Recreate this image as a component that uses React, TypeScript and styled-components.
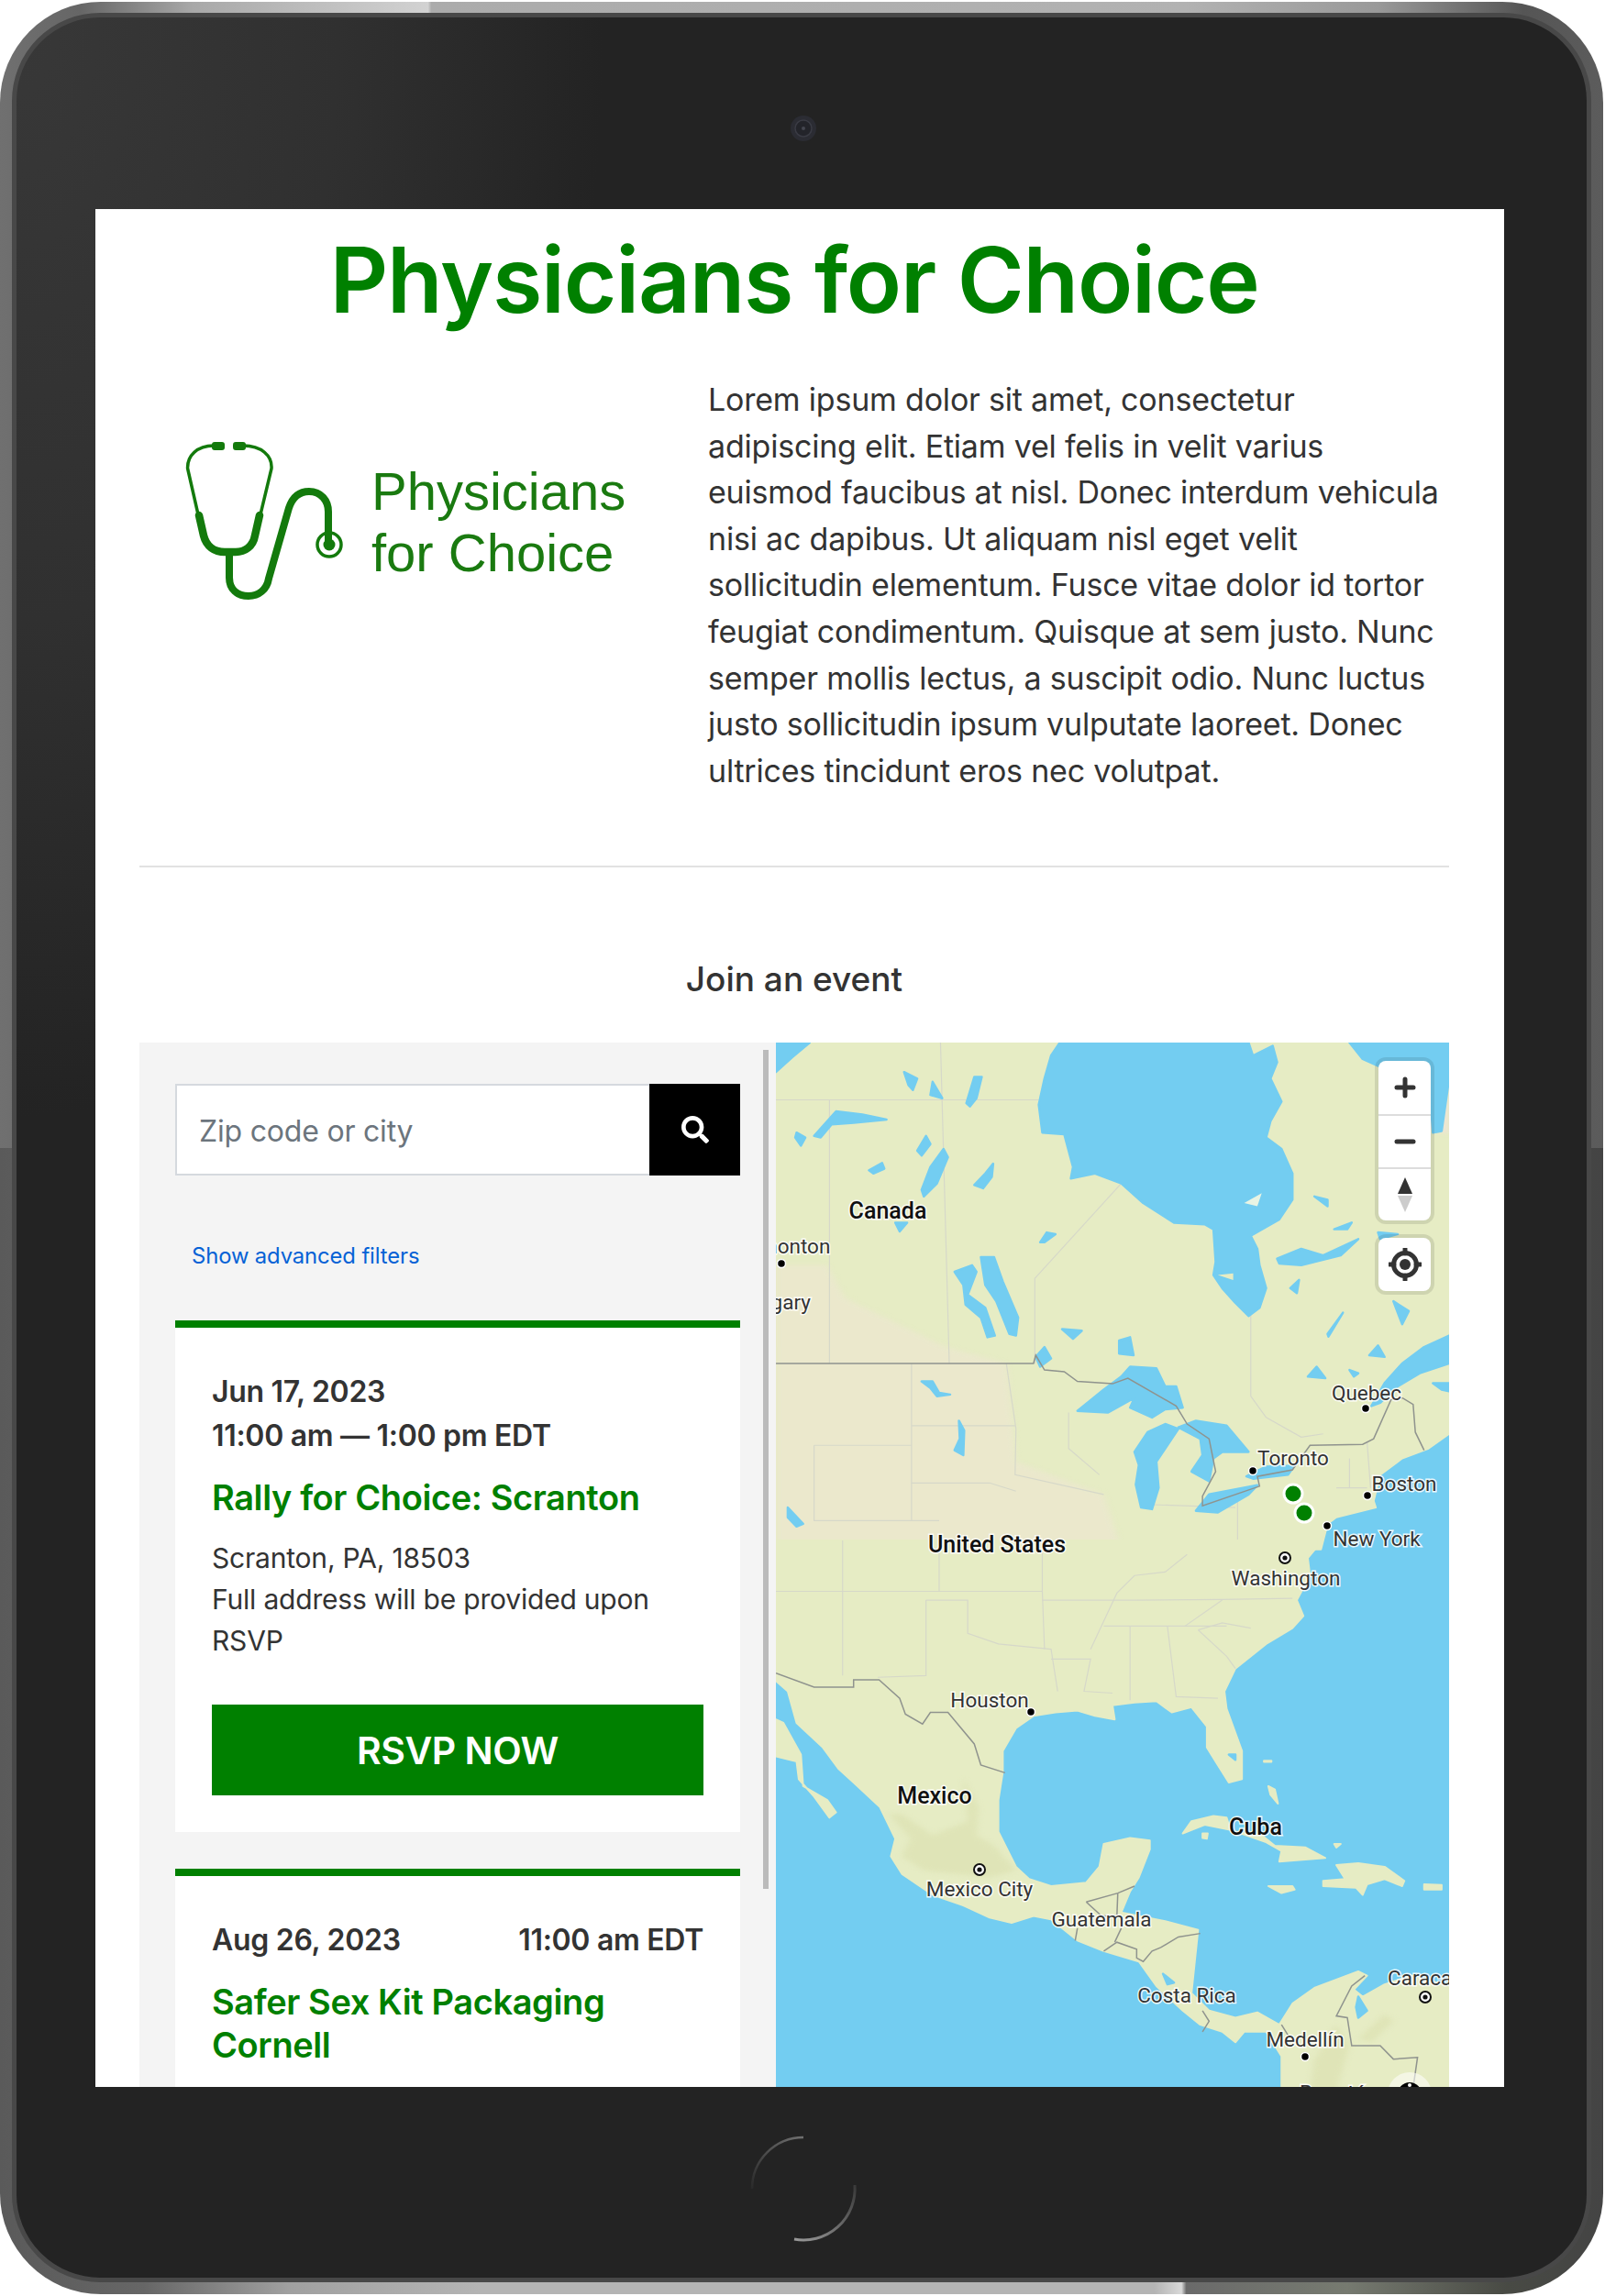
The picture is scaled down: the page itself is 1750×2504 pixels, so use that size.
import styled, { createGlobalStyle } from "styled-components";
import { FaSearch } from "react-icons/fa";

const GlobalStyle = createGlobalStyle`
  html, body {
    margin: 0;
    padding: 0;
    background: #fff;
  }
  * {
    box-sizing: border-box;
  }
`;

const Page = styled.div`
  width: 1750px;
  height: 2504px;
  padding: 2px 2px 2px 0;
`;

const Shell = styled.div`
  width: 1748px;
  height: 2500px;
  padding: 12px 13px 13px;
  border-radius: 110px;
  overflow: hidden;
  background:
    linear-gradient(90deg, #707070 0, #666 5%, #a8a8a8 12%, #d2d2d2 26.7%, #ababab 26.9%, #b2b2b2 74%, #999 86%, #555 95%, #5c5c5c 100%) top / 100% 50% no-repeat,
    linear-gradient(90deg, #5a5a5a 0, #666 9%, #a0a0a0 18%, #b4b4b4 30%, #b4b4b4 72%, #d8d8d8 73.7%, #6a6a6a 74%, #767a70 84%, #484a44 94%, #444 100%) bottom / 100% 50% no-repeat;
`;

const Bezel = styled.div`
  height: 100%;
  border: 5px solid #484848;
  border-radius: 96px;
  display: flex;
  flex-direction: column;
  align-items: center;
  background:
    radial-gradient(ellipse 640px 1200px at 0 0, #383838 0, #303030 55%, transparent 100%),
    #232323;
`;

const CameraRow = styled.div`
  height: 209px;
  flex-shrink: 0;
  width: 100%;
  display: flex;
  justify-content: center;
  padding: 104px 0 0 4px;
`;

const HomeRow = styled.div`
  flex: 1;
  width: 100%;
  display: flex;
  justify-content: center;
  padding: 51px 0 0 4px;
`;

const Screen = styled.div`
  width: 1536px;
  height: 2048px;
  flex-shrink: 0;
  margin-right: 4px;
  padding: 0 60px 0 48px;
  overflow: hidden;
  background: #fff;
  font-family: Inter, "Liberation Sans", sans-serif;
  color: #333;
`;

const PageTitle = styled.h1`
  margin: 0;
  padding-top: 27px;
  height: 116px;
  font-size: 99px;
  line-height: 100px;
  font-weight: 600;
  letter-spacing: -1.2px;
  text-align: center;
  color: #008000;
`;

const Intro = styled.section`
  display: grid;
  grid-template-columns: 620px 1fr;
  height: 602px;
  padding-top: 67px;
  border-bottom: 2px solid #e2e2e2;
`;

const LogoWrap = styled.div`
  display: flex;
  align-items: flex-start;
  padding: 69px 0 0 49px;
`;

const LogoText = styled.div`
  margin: 22px 0 0 29px;
  font-family: "Liberation Sans", Arial, sans-serif;
  font-size: 58px;
  line-height: 67px;
  color: #1a7a10;
`;

const IntroText = styled.p`
  margin: 0;
  font-size: 34px;
  line-height: 50.6px;
  color: #333;
  letter-spacing: -0.2px;
`;

const SectionTitle = styled.h2`
  margin: 0;
  height: 191px;
  padding-top: 97px;
  font-size: 37px;
  line-height: 50px;
  font-weight: 500;
  text-align: center;
`;

const Finder = styled.section`
  display: grid;
  grid-template-columns: 694px 734px;
  height: 1139px;
`;

const Sidebar = styled.div`
  position: relative;
  padding: 45px 39px 0;
  background: #f4f4f4;
  overflow: hidden;
`;

const Scrollbar = styled.div`
  position: absolute;
  top: 8px;
  right: 8px;
  width: 6px;
  height: 915px;
  background: #bbb;
`;

const SearchBar = styled.form`
  display: flex;
  height: 100px;
`;

const SearchInput = styled.input`
  flex: 1;
  min-width: 0;
  border: 2px solid #d5d9de;
  border-right: none;
  background: #fff;
  padding: 2px 24px 0;
  font: 400 32px Inter, "Liberation Sans", sans-serif;
  letter-spacing: -0.2px;
  &::placeholder {
    color: #6c757d;
    opacity: 1;
  }
`;

const SearchButton = styled.button`
  width: 99px;
  border: none;
  background: #000;
  color: #fff;
  display: flex;
  align-items: center;
  justify-content: center;
  padding: 0;
  font-size: 30px;
`;

const FilterLink = styled.a`
  display: block;
  margin: 70px 0 0 18px;
  height: 88px;
  font-size: 23.8px;
  line-height: 36px;
  color: #0562d6;
  letter-spacing: -0.1px;
`;

const EventCard = styled.article`
  background: #fff;
  border-top: 8px solid #008000;
  padding: 46px 40px 40px;
  margin-bottom: 40px;
`;

const DateLine = styled.div`
  font-size: 32px;
  line-height: 48px;
  font-weight: 600;
  color: #333;
  letter-spacing: -0.3px;
`;

const DateRow = styled(DateLine)`
  display: flex;
  justify-content: space-between;
`;

const EventTitle = styled.a`
  display: block;
  margin: 20px 0 20px;
  font-size: 38px;
  line-height: 47px;
  font-weight: 600;
  color: #008000;
  letter-spacing: -0.4px;
`;

const Address = styled.div`
  font-size: 30px;
  line-height: 44.8px;
  color: #333;
  letter-spacing: -0.2px;
`;

const RsvpButton = styled.button`
  display: block;
  width: 100%;
  height: 99px;
  margin-top: 48px;
  border: none;
  background: #008000;
  color: #fff;
  font: 600 41px Inter, "Liberation Sans", sans-serif;
  letter-spacing: -0.5px;
`;

const MapPane = styled.div`
  position: relative;
  overflow: hidden;
  background: #73cdf1;
`;

const MapCanvas = styled.svg`
  display: block;
  width: 734px;
  height: 1139px;
`;

const MapLabel = styled.text<{ $strong?: boolean }>`
  font-family: Roboto, "Liberation Sans", sans-serif;
  font-size: ${({ $strong }) => ($strong ? "25px" : "22.5px")};
  font-weight: ${({ $strong }) => ($strong ? 500 : 400)};
  fill: ${({ $strong }) => ($strong ? "#111" : "#333")};
  stroke: rgba(255, 255, 255, 0.85);
  stroke-width: 3px;
  paint-order: stroke;
  text-anchor: middle;
`;

const ThinLine = styled.path<{ $dark?: boolean }>`
  fill: none;
  stroke: ${({ $dark }) => ($dark ? "#8f938e" : "#d6d8c9")};
  stroke-width: ${({ $dark }) => ($dark ? 1.5 : 1.2)}px;
  vector-effect: non-scaling-stroke;
`;

const WaterBody = styled.polygon`
  fill: #73cdf1;
  stroke: #73cdf1;
  stroke-width: 2.5px;
  stroke-linejoin: round;
  vector-effect: non-scaling-stroke;
`;

const LandBody = styled.polygon`
  fill: #e6ecc4;
  stroke: #e6ecc4;
  stroke-width: 2px;
  stroke-linejoin: round;
  vector-effect: non-scaling-stroke;
`;

const SoftShade = styled.polygon<{ $tone: string }>`
  fill: ${({ $tone }) => $tone};
  filter: blur(7px);
`;

const MapControls = styled.div`
  position: absolute;
  top: 20px;
  right: 20px;
  display: flex;
  flex-direction: column;
  gap: 19px;
`;

const ControlGroup = styled.div`
  width: 57px;
  background: #fff;
  border-radius: 8px;
  box-shadow: 0 0 0 4px rgba(0, 0, 0, 0.1);
  overflow: hidden;
`;

const ControlButton = styled.div`
  height: 58px;
  display: flex;
  align-items: center;
  justify-content: center;
  & + & {
    border-top: 2px solid #ddd;
  }
`;

// north and south groups take their coordinates from two crops of the map
const northTransform = "translate(-6.2,-7.14) scale(0.4785,0.3571)";
const southTransform = "translate(-6.2,543) scale(0.4785,0.3827)";

const northLand =
  "13,20 1547,20 1547,1215 1500,1260 1440,1290 1390,1340 1375,1420 1380,1440 1290,1470 1270,1490 1255,1568 13,1568";

const southLand =
  "13,0 1245,0 1245,20 1225,50 1230,100 1200,170 1215,215 1190,250 1130,295 1060,365 1035,430 1040,480 1075,600 1075,680 1045,690 1020,640 995,590 995,530 960,475 915,490 880,458 830,462 780,470 785,510 740,500 700,485 650,490 600,500 560,535 530,600 530,660 520,740 520,830 560,930 590,965 640,985 720,975 750,930 760,865 820,848 865,855 865,880 840,960 820,1000 800,1060 900,1085 975,1110 965,1230 960,1290 1000,1340 1060,1360 1110,1345 1160,1380 1190,1320 1240,1275 1340,1228 1360,1240 1330,1280 1350,1300 1400,1265 1460,1240 1547,1270 1547,1568 1165,1568 1165,1470 1130,1400 1080,1400 1060,1430 1030,1400 980,1380 940,1340 880,1270 840,1200 760,1170 700,1140 640,1080 600,1070 550,1090 500,1075 440,1040 370,1010 300,950 275,900 285,850 250,760 190,690 155,650 120,590 60,520 40,430 13,400";

const southIslands = [
  "13,510 30,520 70,610 75,700 130,740 150,775 135,790 100,730 65,680 60,630 13,615",
  "940,835 960,800 1010,785 1040,790 1050,830 1120,840 1150,870 1220,875 1265,905 1160,915 1165,885 1130,860 1050,825 990,810",
  "1290,925 1340,920 1400,930 1445,970 1440,985 1400,965 1360,980 1350,1010 1335,990 1260,985 1260,970 1310,965",
  "1135,985 1190,985 1195,995 1165,1005",
  "1490,980 1530,982 1530,995 1490,995",
  "1135,700 1150,710 1157,750 1140,725",
  "1285,865 1300,865 1290,875",
  "985,835 997,835 995,850 985,848",
  "1125,628 1142,628 1142,631 1125,631",
];

const northWater = [
  "640,60 660,20 1090,20 1100,60 1145,30 1155,80 1140,130 1165,200 1140,260 1130,310 1165,345 1190,420 1190,500 1160,560 1095,610 1110,650 1115,700 1130,770 1115,830 1090,855 1060,815 1030,770 1010,730 1015,690 1010,590 990,575 920,570 850,510 800,450 740,420 685,435 690,400 670,300 620,295 612,210 625,130",
  "13,20 90,20 50,65 13,110",
  "1320,20 1547,20 1547,130 1530,290 1510,295 1500,110 1400,100 1350,70",
  "1547,915 1490,950 1440,1000 1400,1060 1370,1130 1390,1120 1430,1070 1480,1030 1547,1000",
  "1510,1060 1547,1060 1547,1085 1530,1080",
  "700,1145 760,1080 800,1040 820,1010 880,1015 900,1070 925,1070 940,1135 900,1140 870,1165 820,1135 830,1105 770,1150",
  "830,1270 860,1210 900,1185 930,1200 900,1260 880,1300 885,1380 870,1445 845,1440 833,1370 840,1310",
  "930,1195 970,1175 1040,1190 1090,1270 1030,1270 1010,1290 1000,1360 960,1330 985,1280 980,1230",
  "970,1450 1000,1400 1110,1372 1090,1400 1020,1455",
  "1085,1345 1130,1315 1195,1312 1180,1340 1100,1352",
  "480,675 510,675 530,750 565,860 560,915 545,910 515,810 490,760",
  "420,720 460,700 470,720 450,790 490,830 512,915 495,920 480,860 445,820 440,760",
  "305,110 335,130 325,165 315,150",
  "370,140 392,190 365,180",
  "465,125 482,125 470,190 455,215 447,205",
  "100,305 150,230 210,240 265,255 190,265 140,270 115,310",
  "60,295 80,310 70,335 57,310",
  "335,350 355,305 365,330 345,365",
  "225,410 255,388 260,405 235,420",
  "395,345 405,370 380,450 350,490 345,470 365,400",
  "465,455 490,420 508,390 505,430 485,465",
  "285,570 312,570 295,597",
  "615,630 630,600 650,605 625,630",
  "795,930 820,920 828,975 795,970",
  "665,895 710,900 690,925",
  "605,980 625,950 640,985 615,1010",
  "345,1055 370,1055 385,1090 410,1095 380,1100 365,1075",
  "430,1175 442,1205 440,1280 420,1265 432,1230",
  "40,1440 75,1490 60,1498 40,1470",
  "1240,490 1270,500 1270,520",
  "1285,590 1325,570 1315,590",
  "1155,680 1210,650 1260,670 1340,620 1300,670 1210,700 1160,695",
  "1385,600 1430,605 1390,620",
  "1185,770 1205,745 1200,785",
  "1420,810 1455,840 1440,880",
  "1270,910 1305,845 1280,900 1272,918",
  "1365,975 1385,945 1400,980",
  "1225,1040 1245,1010 1265,1045",
  "1320,1020 1340,1030 1330,1040",
];

const northLight = [
  "M135,195 L135,1000",
  "M13,195 L612,195",
  "M388,20 L408,1000",
  "M603,1000 L603,740 L800,450",
  "M322,1000 L322,1480",
  "M538,1000 L560,1200 L558,1340 L760,1400",
  "M322,1190 L558,1190",
  "M100,1250 L322,1250 M100,1250 L100,1480 L385,1480",
  "M322,1365 L500,1365 L560,1390",
  "M1095,830 L1095,1100 L1130,1165 L1210,1225 L1260,1215",
  "M680,1150 L680,1260 L750,1340",
  "M845,1430 L1060,1440",
  "M1065,1420 L1065,1550 L1240,1550",
  "M1290,1380 L1360,1380 M1320,1290 L1320,1380 M1360,1240 L1368,1380",
];

const northBorder =
  "M13,1000 L600,1000 L605,975 L625,1020 L670,1025 L700,1055 L780,1062 L815,1045 L925,1130 L950,1185 L1000,1230 L1015,1330 L985,1405 L985,1435 L1115,1375 L1110,1345 L1190,1325 L1230,1250 L1350,1247 L1375,1230 L1415,1110 L1440,1105 L1465,1125 L1470,1210 L1490,1265";

const southLight = [
  "M13,145 L620,145",
  "M165,0 L165,385",
  "M355,170 L355,385 L245,390",
  "M355,170 L450,170 L450,265 L520,295 L640,310 L655,430",
  "M620,0 L620,145 L625,310",
  "M640,338 L730,338 L715,430 L780,435",
  "M620,170 L830,170 L1030,168 L1190,165",
  "M760,244 L1040,244",
  "M820,244 L820,455",
  "M905,244 L925,445 L1020,450",
  "M730,310 L790,150 L830,100 L900,90 L950,40",
  "M975,255 L1030,235 L1095,250 M975,255 L1040,330 L1060,365",
  "M945,244 L1030,170",
  "M385,0 L385,145",
];

const southBorder = [
  "M13,378 L100,418 L190,418 L190,397 L248,397 L295,450 L308,495 L347,523 L365,490 L405,490 L465,580 L480,640 L535,662",
  "M720,1030 L792,1005 L830,985 M720,1030 L755,1070 L790,1070 L792,1005",
  "M695,1140 L700,1105",
  "M760,1170 L790,1145 L835,1165 L835,1190 L850,1200 L870,1170 L890,1160 L930,1130 L980,1120",
  "M800,1105 L785,1145",
  "M1355,1240 L1325,1270 L1290,1355 L1315,1360 L1325,1440 L1390,1440 L1420,1478 L1475,1473 L1465,1560",
  "M1165,1380 L1180,1410",
  "M985,1340 L1000,1370 L985,1400",
];

const southTerrain = [
  "440,680 475,760 470,840 510,870 560,940 500,960 420,950 350,940 300,900 320,850 270,780 300,780 370,840 450,800",
  "1240,1480 1290,1380 1320,1440 1290,1568 1230,1568",
  "1340,1420 1400,1350 1420,1370 1370,1430",
];

const labels = [
  { text: "Canada", x: 122, y: 192, strong: true },
  { text: "Edmonton", x: 8, y: 230 },
  { text: "Calgary", x: 0, y: 291 },
  { text: "Quebec", x: 644, y: 390 },
  { text: "Toronto", x: 564, y: 461 },
  { text: "Boston", x: 685, y: 489 },
  { text: "New York", x: 655, y: 549 },
  { text: "United States", x: 241, y: 556, strong: true },
  { text: "Washington", x: 556, y: 592 },
  { text: "Houston", x: 233, y: 725 },
  { text: "Mexico", x: 173, y: 830, strong: true },
  { text: "Cuba", x: 523, y: 864, strong: true },
  { text: "Mexico City", x: 222, y: 931 },
  { text: "Guatemala", x: 355, y: 964 },
  { text: "Costa Rica", x: 448, y: 1047 },
  { text: "Caracas", x: 708, y: 1028 },
  { text: "Medellín", x: 577, y: 1095 },
  { text: "Bogotá", x: 607, y: 1153 },
];

const cityDots = [
  [6, 241],
  [520, 467],
  [645, 494],
  [601, 527],
  [643, 399],
  [278, 730],
  [577, 1106],
];

const capitals = [
  [555, 562],
  [222, 902],
  [708, 1041],
];

const eventPins = [
  [564, 492],
  [576, 513],
];

function WorldMap() {
  return (
    <MapCanvas viewBox="0 0 734 1139">
      <g transform={northTransform}>
        <LandBody points={northLand} />
        <SoftShade
          points="13,700 130,700 170,800 400,950 540,1000 560,1300 760,1400 800,1568 13,1568"
          $tone="rgba(236, 231, 208, 0.7)"
        />
        <SoftShade points="1390,20 1547,20 1547,300 1420,260" $tone="rgba(238, 228, 214, 0.85)" />
        {northLight.map((d) => (
          <ThinLine key={d} d={d} />
        ))}
        {northWater.map((points) => (
          <WaterBody key={points} points={points} />
        ))}
        <polygon points="1080,510 1120,480 1110,520" fill="#e8f4e4" />
        <polygon points="1020,730 1055,725 1055,745" fill="#e6ecc4" />
        <ThinLine $dark d={northBorder} />
      </g>
      <g transform={southTransform}>
        <LandBody points={southLand} />
        {southIslands.map((points) => (
          <LandBody key={points} points={points} />
        ))}
        {southTerrain.map((points) => (
          <SoftShade key={points} points={points} $tone="rgba(221, 226, 180, 0.8)" />
        ))}
        <WaterBody points="1045,610 1060,610 1060,625" />
        <WaterBody points="1340,1300 1360,1340 1340,1360 1335,1330" />
        <WaterBody points="895,1235 920,1260 905,1265" />
        {southLight.map((d) => (
          <ThinLine key={d} d={d} />
        ))}
        {southBorder.map((d) => (
          <ThinLine key={d} $dark d={d} />
        ))}
      </g>
      {labels.map((label) => (
        <MapLabel key={label.text} x={label.x} y={label.y} $strong={label.strong}>
          {label.text}
        </MapLabel>
      ))}
      {cityDots.map(([x, y]) => (
        <circle key={`${x}-${y}`} cx={x} cy={y} r={4.5} fill="#000" stroke="#fff" strokeWidth={1.5} />
      ))}
      {capitals.map(([x, y]) => (
        <g key={`${x}-${y}`}>
          <circle cx={x} cy={y} r={6} fill="#fff" stroke="#111" strokeWidth={2} />
          <circle cx={x} cy={y} r={2.6} fill="#111" />
        </g>
      ))}
      <circle cx={691} cy={1147} r={24} fill="#fff" opacity="0.55" />
      <circle cx={691} cy={1147} r={13} fill="#000" />
      <circle cx={691} cy={1137} r={2} fill="#fff" />
      {eventPins.map(([x, y]) => (
        <circle key={x} cx={x} cy={y} r={10} fill="#008000" stroke="#fff" strokeWidth={3} />
      ))}
    </MapCanvas>
  );
}

function LogoMark() {
  return (
    <svg width="175" height="175" viewBox="0 0 175 175" fill="none" stroke="#137a0c" strokeLinecap="round">
      <path d="M32 6 C 14 6 3 17 3.600 31 L15 81 M64 6 C 84 6 96 17 95 31 L83 81" strokeWidth="3.500" />
      <path d="M16 82 L21 104 C 24 116 33 122 44 122 L56 122 C 66 122 75 116 77 104 L82 82" strokeWidth="8.500" />
      <path
        d="M49 124 L49 150 C 49 163 58 170 70 170 C 81 170 90 163 92 151 L114 74 C 118 62 126 56 136 56 C 149 56 157 66 157 78 L157 110"
        strokeWidth="8"
      />
      <circle cx="158" cy="114" r="13" strokeWidth="3.500" />
      <circle cx="158" cy="114" r="6.500" fill="#137a0c" stroke="none" />
      <rect x="30" y="2" width="14" height="9" rx="3" fill="#137a0c" stroke="none" />
      <rect x="53" y="2" width="14" height="9" rx="3" fill="#137a0c" stroke="none" />
    </svg>
  );
}

function App() {
  return (
    <>
      <GlobalStyle />
      <Page>
        <Shell>
          <Bezel>
            <CameraRow>
              <svg width="32" height="34" viewBox="0 0 32 34">
                <circle cx="16" cy="17" r="14" fill="#2b2c33" />
                <circle cx="16" cy="17" r="9" fill="#23242a" stroke="#3a3b44" strokeWidth="1.500" />
                <circle cx="16" cy="17" r="2" fill="#444650" />
              </svg>
            </CameraRow>
            <Screen>
              <PageTitle>Physicians for Choice</PageTitle>
              <Intro>
                <LogoWrap>
                  <LogoMark />
                  <LogoText>
                    Physicians
                    <br />
                    for Choice
                  </LogoText>
                </LogoWrap>
                <IntroText>
                  Lorem ipsum dolor sit amet, consectetur adipiscing elit. Etiam vel felis in velit varius euismod
                  faucibus at nisl. Donec interdum vehicula nisi ac dapibus. Ut aliquam nisl eget velit sollicitudin
                  elementum. Fusce vitae dolor id tortor feugiat condimentum. Quisque at sem justo. Nunc semper mollis
                  lectus, a suscipit odio. Nunc luctus justo sollicitudin ipsum vulputate laoreet. Donec ultrices
                  tincidunt eros nec volutpat.
                </IntroText>
              </Intro>
              <SectionTitle>Join an event</SectionTitle>
              <Finder>
                <Sidebar>
                  <Scrollbar />
                  <SearchBar>
                    <SearchInput placeholder="Zip code or city" />
                    <SearchButton type="button">
                      <FaSearch />
                    </SearchButton>
                  </SearchBar>
                  <FilterLink>Show advanced filters</FilterLink>
                  <EventCard>
                    <DateLine>Jun 17, 2023</DateLine>
                    <DateLine>11:00 am — 1:00 pm EDT</DateLine>
                    <EventTitle>Rally for Choice: Scranton</EventTitle>
                    <Address>
                      Scranton, PA, 18503
                      <br />
                      Full address will be provided upon RSVP
                    </Address>
                    <RsvpButton type="button">RSVP NOW</RsvpButton>
                  </EventCard>
                  <EventCard>
                    <DateRow>
                      <span>Aug 26, 2023</span>
                      <span>11:00 am EDT</span>
                    </DateRow>
                    <EventTitle>Safer Sex Kit Packaging Cornell</EventTitle>
                  </EventCard>
                </Sidebar>
                <MapPane>
                  <WorldMap />
                  <MapControls>
                    <ControlGroup>
                      <ControlButton>
                        <svg width="24" height="24" viewBox="0 0 24 24" stroke="#333" strokeWidth="5" strokeLinecap="round">
                          <path d="M12 3 V21 M3 12 H21" />
                        </svg>
                      </ControlButton>
                      <ControlButton>
                        <svg width="24" height="24" viewBox="0 0 24 24" stroke="#333" strokeWidth="5" strokeLinecap="round">
                          <path d="M3 12 H21" />
                        </svg>
                      </ControlButton>
                      <ControlButton>
                        <svg width="18" height="38" viewBox="0 0 18 38">
                          <path d="M9 0 L17 18 H1 Z" fill="#333" />
                          <path d="M9 38 L17 20 H1 Z" fill="#ccc" />
                        </svg>
                      </ControlButton>
                    </ControlGroup>
                    <ControlGroup>
                      <ControlButton>
                        <svg width="36" height="36" viewBox="0 0 36 36" fill="none" stroke="#333">
                          <circle cx="18" cy="18" r="12.500" strokeWidth="5" />
                          <circle cx="18" cy="18" r="6" fill="#333" stroke="none" />
                          <path d="M18 1 V6 M18 30 V35 M1 18 H6 M30 18 H35" strokeWidth="5" strokeLinecap="round" />
                        </svg>
                      </ControlButton>
                    </ControlGroup>
                  </MapControls>
                </MapPane>
              </Finder>
            </Screen>
            <HomeRow>
              <svg width="120" height="120" viewBox="0 0 120 120" fill="none">
                <defs>
                  <linearGradient id="homeArcTop" x1="0" y1="1" x2="1" y2="0">
                    <stop offset="0" stopColor="#2a2a2a" />
                    <stop offset="1" stopColor="#707070" />
                  </linearGradient>
                  <linearGradient id="homeArcBottom" x1="1" y1="0" x2="0" y2="1">
                    <stop offset="0" stopColor="#3a3a3a" />
                    <stop offset="1" stopColor="#999" />
                  </linearGradient>
                </defs>
                <path d="M4 60 A 56 56 0 0 1 60 4" stroke="url(#homeArcTop)" strokeWidth="2.500" />
                <path d="M116 56 A 56 56 0 0 1 50 115" stroke="url(#homeArcBottom)" strokeWidth="3" />
              </svg>
            </HomeRow>
          </Bezel>
        </Shell>
      </Page>
    </>
  );
}

export default App;
